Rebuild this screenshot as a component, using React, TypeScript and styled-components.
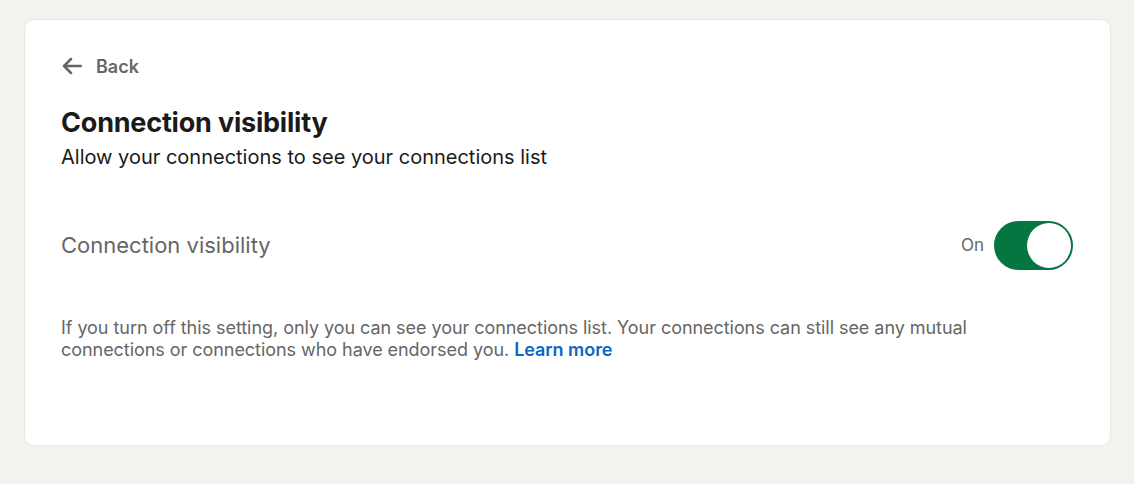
import React, { useState } from "react";
import styled, { createGlobalStyle } from "styled-components";

const Global = createGlobalStyle`
  html, body { margin: 0; padding: 0; background: #f3f2ef; }
  body { font-family: Inter, "Noto Sans", sans-serif; -webkit-font-smoothing: antialiased; }
`;

const Page = styled.div`
  padding: 19px 23px 0 24px;
  min-height: 484px;
  box-sizing: border-box;
`;

const Card = styled.section`
  background: #fff;
  border: 1px solid #e8e8e6;
  border-radius: 10px;
  height: 427px;
  box-sizing: border-box;
  padding: 33px 37px 0 36px;
  display: flex;
  flex-direction: column;
`;

const BackButton = styled.button`
  display: flex;
  align-items: center;
  gap: 14px;
  background: none;
  border: none;
  padding: 0;
  margin: 0;
  height: 26px;
  color: #666;
  font-family: inherit;
  font-size: 18px;
  font-weight: 600;
  cursor: pointer;
  align-self: flex-start;
`;

const Title = styled.h1`
  margin: 27px 0 0;
  font-size: 27px;
  line-height: 34px;
  font-weight: 700;
  letter-spacing: -0.2px;
  color: #1a1a1a;
`;

const Subtitle = styled.p`
  margin: 4px 0 0;
  font-size: 20px;
  line-height: 26px;
  color: #1a1a1a;
`;

const SettingRow = styled.div`
  margin-top: 50px;
  display: flex;
  align-items: center;
  justify-content: space-between;
  height: 50px;
`;

const RowLabel = styled.span`
  font-size: 22px;
  color: #666;
`;

const ToggleWrap = styled.label`
  display: flex;
  align-items: center;
  gap: 10px;
  font-size: 17px;
  color: #666;
  cursor: pointer;
`;

const Track = styled.span<{ $on: boolean }>`
  position: relative;
  width: 79px;
  height: 49px;
  border-radius: 25px;
  background: ${(p) => (p.$on ? "#057642" : "#8c8c8c")};
  display: inline-block;
`;

const Knob = styled.span<{ $on: boolean }>`
  position: absolute;
  top: 2px;
  left: ${(p) => (p.$on ? "33px" : "2px")};
  width: 44px;
  height: 45px;
  border-radius: 50%;
  background: #fff;
  transition: left 0.15s;
`;

const Description = styled.p`
  margin: 47px 0 0;
  font-size: 18px;
  line-height: 22px;
  letter-spacing: -0.05px;
  color: #666;
  max-width: 960px;
`;

const LearnMore = styled.a`
  color: #0a66c2;
  font-weight: 600;
  text-decoration: none;
`;

const ArrowIcon = () => (
  <svg width="21" height="18" viewBox="0 0 21 18" fill="none">
    <path d="M20 9H3M10 2L3 9l7 7" stroke="#666" strokeWidth="2.5" strokeLinecap="round" strokeLinejoin="round" />
  </svg>
);

export default function App() {
  const [on, setOn] = useState(true);
  return (
    <>
      <Global />
      <Page>
        <Card>
          <BackButton>
            <ArrowIcon />
            Back
          </BackButton>
          <Title>Connection visibility</Title>
          <Subtitle>Allow your connections to see your connections list</Subtitle>
          <SettingRow>
            <RowLabel>Connection visibility</RowLabel>
            <ToggleWrap onClick={() => setOn(!on)}>
              {on ? "On" : "Off"}
              <Track $on={on}>
                <Knob $on={on} />
              </Track>
            </ToggleWrap>
          </SettingRow>
          <Description>
            If you turn off this setting, only you can see your connections list. Your connections can still see any mutual connections or connections who have endorsed you.{" "}
            <LearnMore href="#">Learn more</LearnMore>
          </Description>
        </Card>
      </Page>
    </>
  );
}
